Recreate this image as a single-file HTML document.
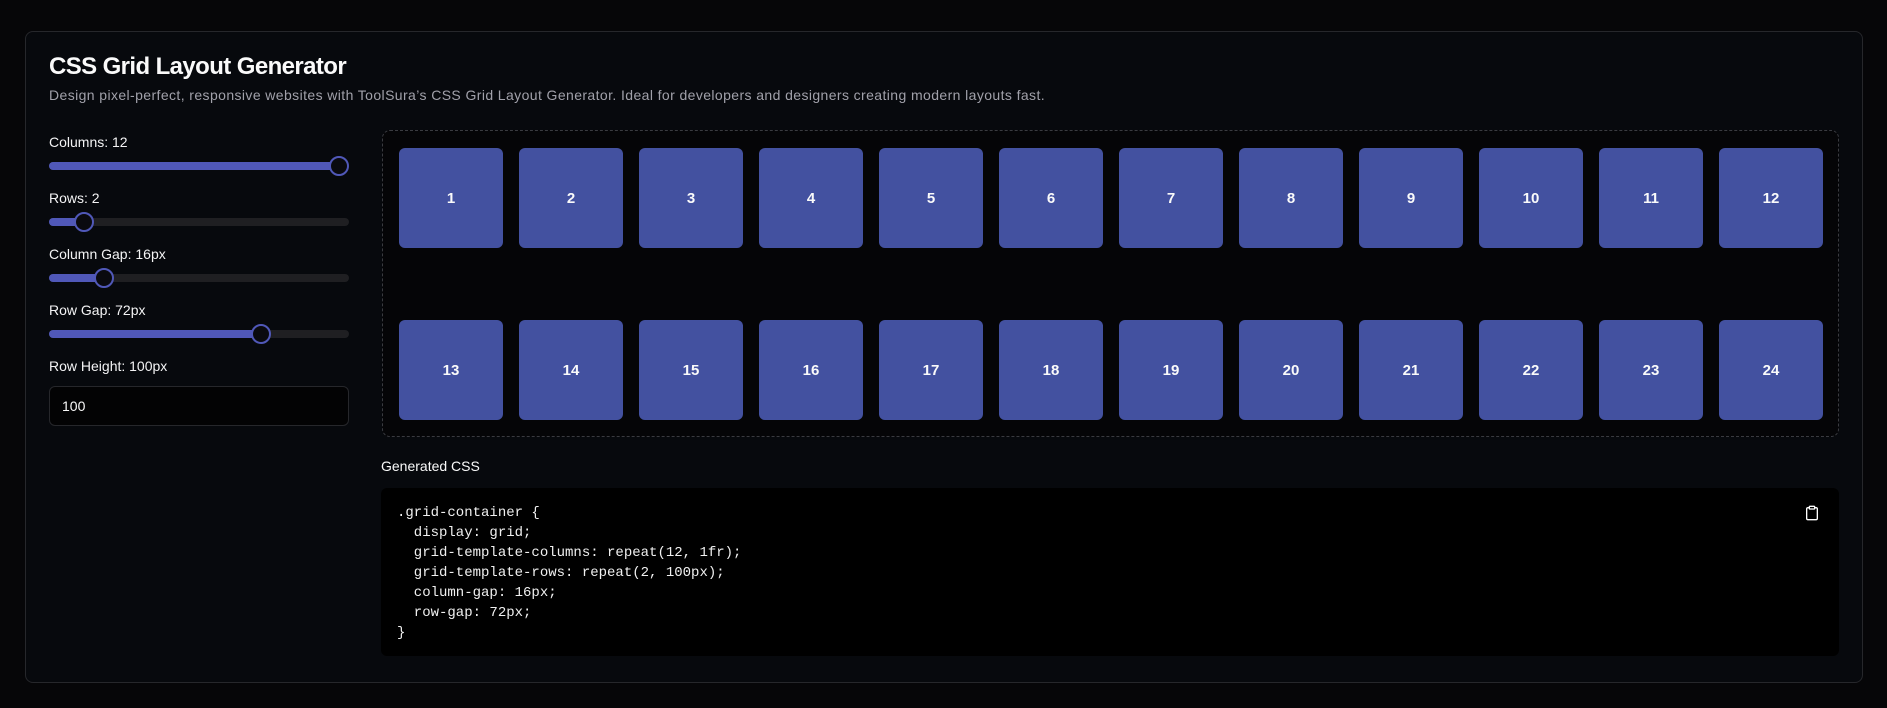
<!DOCTYPE html>
<html><head><meta charset="utf-8"><style>
*{box-sizing:border-box;margin:0;padding:0}
html,body{width:1887px;height:708px;background:#060608;overflow:hidden;font-family:"Liberation Sans",sans-serif;color:#fafafa}
.card{position:absolute;left:25px;top:31px;width:1838px;height:652px;border:1px solid #26272b;border-radius:8px;background:#07090d}
.t{position:absolute;left:49px;top:53px;font-size:24px;font-weight:bold;letter-spacing:-0.6px}
.s{position:absolute;left:49px;top:87px;font-size:14px;color:#a1a1aa;letter-spacing:0.4px}
.lab{position:absolute;left:49px;font-size:14px;color:#f4f4f5}
.trk{position:absolute;left:49px;width:300px;height:8px;border-radius:4px;background:#1f1f22}
.fill{position:absolute;left:0;top:0;height:8px;border-radius:4px;background:#5058b8}
.th{position:absolute;top:-6px;width:20px;height:20px;margin-left:-10px;border-radius:50%;background:#0a0a0f;border:2px solid #5058b8}
.inp{position:absolute;left:49px;top:386px;width:300px;height:40px;border:1px solid #26272b;border-radius:6px;background:#030304;font-size:14px;padding:11px 0 0 12px}
.grid{position:absolute;left:382px;top:130px;width:1457px;height:307px;border:1px dashed #3a3b40;border-radius:8px;background:#050507}
.c{position:absolute;width:104px;height:100px;border-radius:6px;background:#4351a0;display:flex;align-items:center;justify-content:center;font-weight:bold;font-size:15px}
.g{position:absolute;left:381px;top:458px;font-size:14px}
.code{position:absolute;left:381px;top:488px;width:1458px;height:168px;background:#000;border-radius:6px}
pre{position:absolute;left:397px;top:503px;font-family:"Liberation Mono",monospace;font-size:14px;line-height:20px;color:#f0f0f0}
</style></head><body>
<div class="card"></div>
<div class="t">CSS Grid Layout Generator</div>
<div class="s">Design pixel-perfect, responsive websites with ToolSura’s CSS Grid Layout Generator. Ideal for developers and designers creating modern layouts fast.</div>
<div class="lab" style="top:134px">Columns: 12</div>
<div class="trk" style="top:162px"><div class="fill" style="width:290px"></div><div class="th" style="left:290px"></div></div>
<div class="lab" style="top:190px">Rows: 2</div>
<div class="trk" style="top:218px"><div class="fill" style="width:35px"></div><div class="th" style="left:35px"></div></div>
<div class="lab" style="top:246px">Column Gap: 16px</div>
<div class="trk" style="top:274px"><div class="fill" style="width:55px"></div><div class="th" style="left:55px"></div></div>
<div class="lab" style="top:302px">Row Gap: 72px</div>
<div class="trk" style="top:330px"><div class="fill" style="width:212px"></div><div class="th" style="left:212px"></div></div>
<div class="lab" style="top:358px">Row Height: 100px</div>
<div class="inp">100</div>
<div class="grid"></div>
<div class="c" style="left:399px;top:148px">1</div><div class="c" style="left:519px;top:148px">2</div><div class="c" style="left:639px;top:148px">3</div><div class="c" style="left:759px;top:148px">4</div><div class="c" style="left:879px;top:148px">5</div><div class="c" style="left:999px;top:148px">6</div><div class="c" style="left:1119px;top:148px">7</div><div class="c" style="left:1239px;top:148px">8</div><div class="c" style="left:1359px;top:148px">9</div><div class="c" style="left:1479px;top:148px">10</div><div class="c" style="left:1599px;top:148px">11</div><div class="c" style="left:1719px;top:148px">12</div>
<div class="c" style="left:399px;top:320px">13</div><div class="c" style="left:519px;top:320px">14</div><div class="c" style="left:639px;top:320px">15</div><div class="c" style="left:759px;top:320px">16</div><div class="c" style="left:879px;top:320px">17</div><div class="c" style="left:999px;top:320px">18</div><div class="c" style="left:1119px;top:320px">19</div><div class="c" style="left:1239px;top:320px">20</div><div class="c" style="left:1359px;top:320px">21</div><div class="c" style="left:1479px;top:320px">22</div><div class="c" style="left:1599px;top:320px">23</div><div class="c" style="left:1719px;top:320px">24</div>
<div class="g">Generated CSS</div>
<div class="code"></div>
<pre>.grid-container {
  display: grid;
  grid-template-columns: repeat(12, 1fr);
  grid-template-rows: repeat(2, 100px);
  column-gap: 16px;
  row-gap: 72px;
}</pre>
<svg style="position:absolute;left:1804px;top:505px" width="16" height="16" viewBox="0 0 24 24" fill="none" stroke="#fff" stroke-width="2" stroke-linecap="round" stroke-linejoin="round"><rect x="8" y="2" width="8" height="4" rx="1"/><path d="M16 4h2a2 2 0 0 1 2 2v14a2 2 0 0 1-2 2H6a2 2 0 0 1-2-2V6a2 2 0 0 1 2-2h2"/></svg>
</body></html>
